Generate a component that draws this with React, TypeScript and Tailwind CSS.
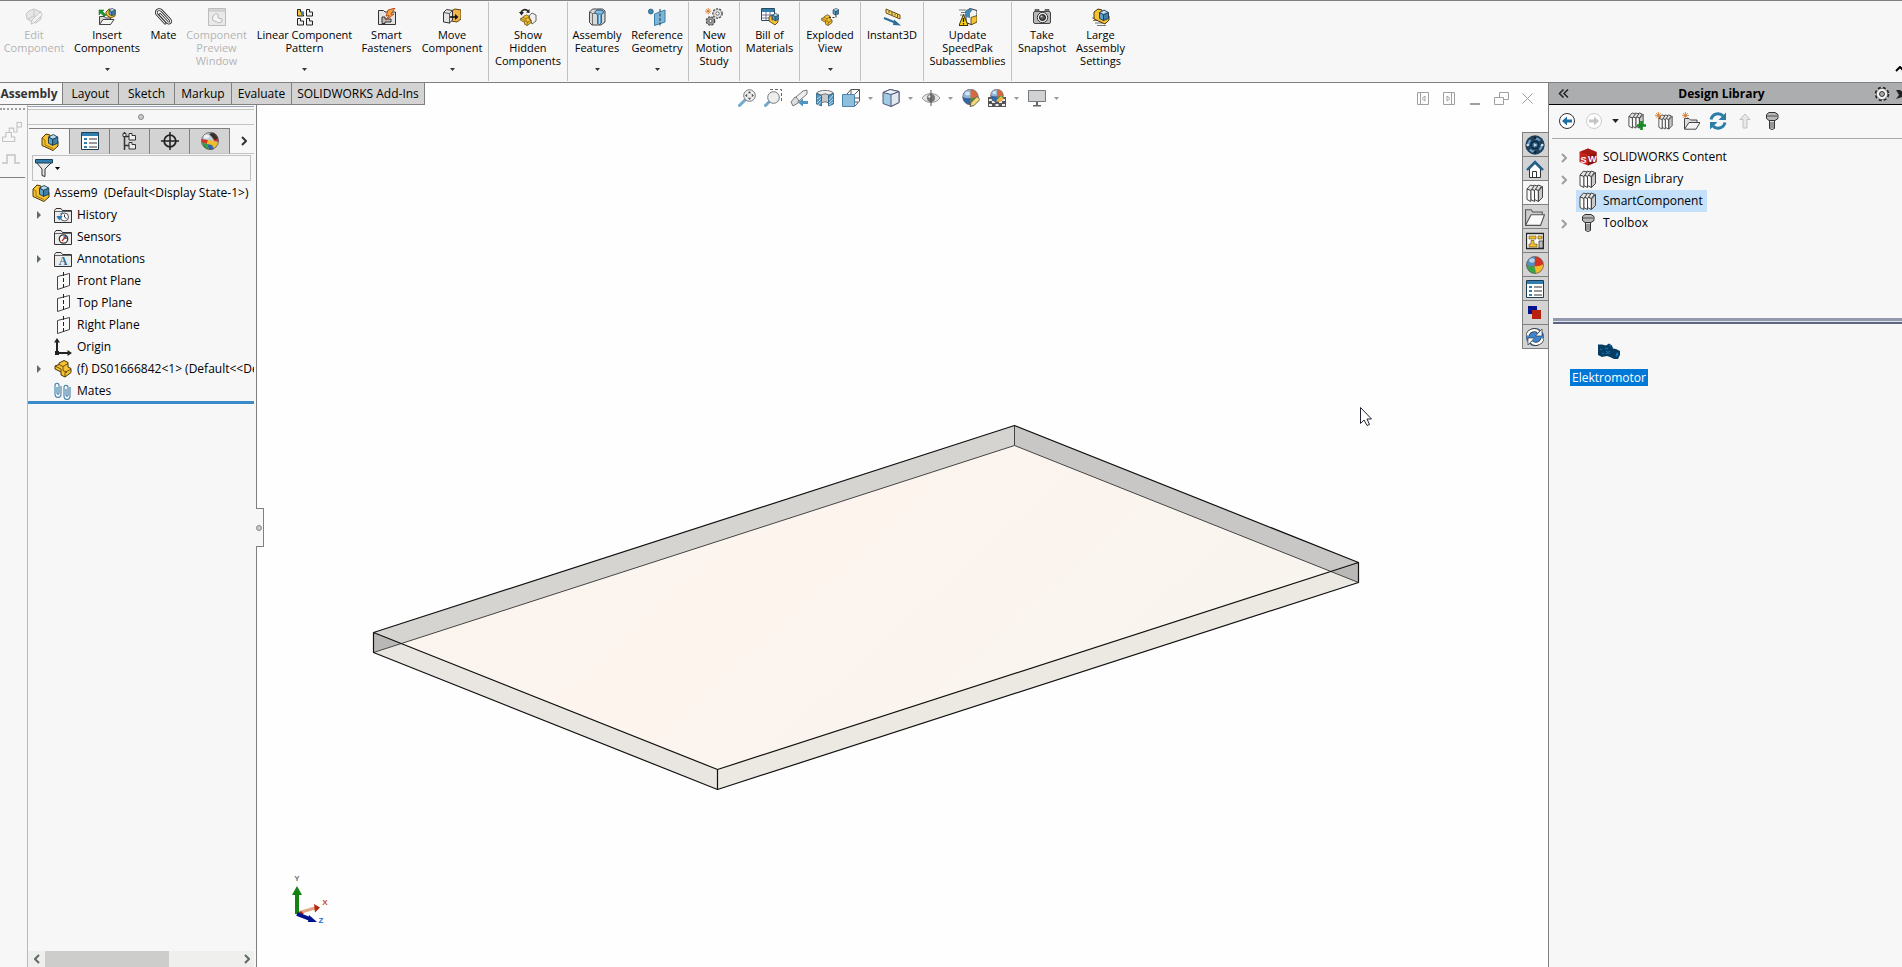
import type { ReactNode } from "react";
import clsx from "clsx";

type IconProps = { className?: string };

function Svg({ children, className, box = "0 0 18 18" }: { children: ReactNode; className?: string; box?: string }) {
  return (
    <svg viewBox={box} className={clsx("shrink-0", className ?? "size-[18px]")} fill="none" aria-hidden="true">
      {children}
    </svg>
  );
}

/* ---------- shared shapes ---------- */

function PartShape({ fill = "#f6c233", stroke = "#4a3606" }) {
  return (
    <g stroke={stroke} strokeLinejoin="round">
      <path d="M1 6l4-1.500V3l5-2.500 4 2V7l3 1.500v4L11 17l-4-2v-3L1 9z" fill={fill} />
      <path d="M5 4.500l4 2v4l4 2M9 6.500l5-3M11 17v-4.500l6-3.500M1 6l6 3v3" strokeWidth=".8" />
    </g>
  );
}

function CubeShape({ x = 0, y = 0, s = 1, front = "#5f9fc8", top = "#b9dcf0", side = "#3f7fab" }) {
  return (
    <g transform={`translate(${x} ${y}) scale(${s})`} stroke="#1c3c50" strokeLinejoin="round" strokeWidth=".9">
      <path d="M0 3l4 2v6L0 9z" fill={front} />
      <path d="M4 5l5-2v6l-5 2z" fill={side} />
      <path d="M0 3l4.500-2.500L9 3 4 5z" fill={top} />
    </g>
  );
}

function FolderShape() {
  return (
    <>
      <path d="M.500 16.500V4.500L2 2.500h5l1.500 2h9v12z" fill="#ececec" stroke="#333" />
      <path d="M1 5.500h16" stroke="#666" />
    </>
  );
}

function BooksShape() {
  return (
    <g stroke="#333" strokeLinejoin="round" strokeWidth=".9">
      <path d="M12.500 7l4-4.500v11l-4 4z" fill="#c9c9c9" />
      {[8.5, 4.700, 1].map((x) => (
        <g key={x}>
          <path d={`M${x} 5l3.500-4 3.500 1.200-3.300 4.500z`} fill="#e2e2e2" />
          <path d={`M${x} 5l3.800 1.500v11L${x} 15.500z`} fill="#fbfbfb" />
        </g>
      ))}
    </g>
  );
}

function Spark() {
  return <path d="M4 0v8M0 4h8M1.300 1.300l5.400 5.400M6.700 1.300L1.300 6.700" stroke="#d4741c" strokeWidth="1" />;
}

/* ---------- command icons ---------- */

const EditComponent = () => (
  <Svg>
    <g stroke="#c6c6c6" fill="#e6e6e6" strokeLinejoin="round">
      <path d="M1 6l3-3 5-2 7 3v7l-5 4-4-1-5-3z" />
      <path d="M9 2v6l-6 3M9 8l6 2" />
      <path d="M6 16l1-4 8-8 2.500 2.500-8 8z" fill="#f2f2f2" />
    </g>
  </Svg>
);

const InsertComponents = () => (
  <Svg>
    <path d="M1.500 16.500v-8h5l1 1.500h5v6.500z" fill="#d5d5d5" stroke="#444" />
    <path d="M1.500 16.500l3.500-5h11l-3.500 5z" fill="#f4f4f4" stroke="#444" />
    <path d="M1 7V2h5L4.500 3.500 8 7 6 8.500 2.800 5z" fill="#1a9a2c" stroke="#0e5e18" strokeWidth=".5" />
    <path d="M8 4l3-3 6 1v6l-4 2-5-3z" fill="#f6c233" stroke="#4a3606" strokeWidth=".8" />
    <CubeShape x={11} y={0} s={0.7} />
  </Svg>
);

const clipPath =
  "M5 6.500l7.500 8c1.200 1.200 3 .4 3.200-.8.200-.8-.2-1.400-.7-2L7 3C5.500 1.300 3.500 1.200 2.300 2.300 1 3.500 1.200 5.500 2.500 7l7.500 8.200";

const Mate = () => (
  <Svg>
    <path d={clipPath} stroke="#222" strokeWidth="2.600" strokeLinecap="round" />
    <path d={clipPath} stroke="#eee" strokeWidth="1.100" strokeLinecap="round" />
  </Svg>
);

const PreviewWindow = () => (
  <Svg>
    <path d="M.5.500h17v17H.5z" fill="#e9e9e9" stroke="#bcbcbc" />
    <path d="M1 2.500h16" stroke="#cfcfcf" strokeWidth="2.500" />
    <path d="M5 8l3-2.500 2 1V10l4 1v2.500L11 15l-6.500-3z" fill="#f5f5f5" stroke="#b6b6b6" />
  </Svg>
);

const LinearPattern = () => (
  <Svg>
    {[
      [1, 1],
      [10, 1],
      [1, 10],
      [10, 10],
    ].map(([x, y], i) => (
      <g key={i} transform={`translate(${x} ${y})`} strokeLinejoin="round">
        <path d="M.5.500h3v2.500h3V7H.5z" fill={i === 0 ? "#f3c441" : "#f0f0f0"} stroke="#222" />
        {i === 0 ? <path d="M4 3h3v3H4z" fill="#3b82b4" /> : null}
      </g>
    ))}
  </Svg>
);

const SmartFasteners = () => (
  <Svg>
    <path d="M.5 16.500V2.500h5L7 4h10.500v12.500z" fill="#e4e4e4" stroke="#333" />
    <path d="M4 9h3v2h6v3H7v1.500H4z" fill="#bbb" stroke="#333" />
    <path d="M17 0l-7 2-2 6 3-.5L8 12l8-6-3 .2z" fill="#f5a13c" stroke="#a9370d" strokeWidth=".8" />
  </Svg>
);

const MoveComponent = () => (
  <Svg>
    <path d="M8 3l4-2 6 1v9l-4 3-6-1z" fill="#eeb44a" stroke="#5d4409" />
    <path d="M.5 4.500l3-3 6 1v9.500l-3 3-6-1z" fill="#e4e4e4" stroke="#333" />
    <path d="M.5 4.500l6 1v10M6.500 5.500l3-3" stroke="#333" strokeWidth=".8" />
    <path d="M7 9h6" stroke="#111" strokeWidth="1.600" />
    <path d="M12 6l3.500 3-3.500 3z" fill="#111" />
  </Svg>
);

const ShowHidden = () => (
  <Svg>
    <path d="M2 5c1-4 5-4 7-2" stroke="#222" strokeWidth="1.600" />
    <path d="M0 4h5L2.500 7.500zM7 4.500L10.500 1v4z" fill="#222" />
    <path d="M10 8l3-3 4 2v6l-4 3z" fill="#f1f1f1" stroke="#666" />
    <g transform="translate(1 6.500) scale(.65)">
      <PartShape />
    </g>
  </Svg>
);

const AssemblyFeatures = () => (
  <Svg>
    <path d="M1.500 4l3-3h10l2.500 2v11l-4 3h-9l-2.500-2.500z" fill="#d9d9d9" stroke="#444" />
    <path d="M1.500 4l3 1.500V17M4.500 5.500H8" stroke="#555" strokeWidth=".8" />
    <path d="M6.500 4l2.500-2h5l2 2-1.500 2-1 .5v8.500l-2 1.500-2-1V7z" fill="#5f9fc8" stroke="#1d5270" strokeWidth=".8" />
    <path d="M11.500 7v9M8 4h6" stroke="#b9dcf0" />
  </Svg>
);

const ReferenceGeometry = () => (
  <Svg>
    <circle cx="2.800" cy="3.500" r="2.500" fill="#3f86b5" stroke="#1d4f71" strokeWidth=".6" />
    <path d="M6.500 6L17 2v12L6.500 17.500z" fill="#7fb6d8" stroke="#3c7da6" />
    <path d="M12 1v17" stroke="#17384d" strokeDasharray="3 1.500" />
  </Svg>
);

function Gear({ cx, cy, r, fill }: { cx: number; cy: number; r: number; fill: string }) {
  return (
    <g>
      <circle cx={cx} cy={cy} r={r} fill={fill} stroke="#444" strokeWidth="1.600" strokeDasharray="2 1.200" />
      <circle cx={cx} cy={cy} r={r - 0.5} fill={fill} stroke="#666" strokeWidth=".5" />
      <circle cx={cx} cy={cy} r={r / 2.6} fill="#fff" stroke="#444" strokeWidth=".8" />
    </g>
  );
}

const MotionStudy = () => (
  <Svg>
    <g transform="scale(.8)">
      <Spark />
    </g>
    <Gear cx={12.5} cy={5.5} r={4.5} fill="#efefef" />
    <Gear cx={5.5} cy={13} r={4} fill="#a5a5a5" />
  </Svg>
);

const BillOfMaterials = () => (
  <Svg>
    <path d="M.5.500h13v12H.5z" fill="#fff" stroke="#2b4a5e" />
    <path d="M1 1h12v3H1z" fill="#2f7eae" />
    <path d="M1 7h12M1 10h12M5 4v8M9 4v8" stroke="#557" strokeWidth=".8" />
    <path d="M8 9l3-2v5l6-2v4l-3 3-6-4z" fill="#f6c233" stroke="#4a3606" strokeWidth=".8" />
    <CubeShape x={11.5} y={5} s={0.7} />
  </Svg>
);

const ExplodedView = () => (
  <Svg>
    <g transform="translate(0 6.500) scale(.65)">
      <PartShape />
    </g>
    <CubeShape x={12} y={0} s={0.65} />
    <path d="M8 9.500h7V6" stroke="#333" strokeDasharray="2 1.500" />
  </Svg>
);

const Instant3D = () => (
  <Svg>
    <path d="M3 1l14 6v4L3 5z" fill="#f8d868" stroke="#6a5010" />
    <path d="M6 3v2M9 4v3M12 5.500v2M14.500 6.500v3" stroke="#333" strokeWidth=".8" />
    <path d="M1 10l11 4.500" stroke="#2b6d97" strokeWidth="2" />
    <path d="M11 11.500l7 6-8-.5z" fill="#2b6d97" />
  </Svg>
);

const SpeedPak = () => (
  <Svg>
    <path d="M0 2h7M2 4.500h6M1 7h6" stroke="#555" strokeWidth=".8" />
    <path d="M7 3l4-2.500 7 2v11l-6 3-5-2z" fill="#f3f3f3" stroke="#333" />
    <path d="M12 9.500l6-2v6.500l-6 3z" fill="#f6c233" stroke="#4a3606" strokeWidth=".8" />
    <path d="M7 3l4-2.500 3 1-3 3.500v5l-4-1z" fill="#4388b5" />
    <path d="M4.500 6.500l4.500 11H0z" fill="#ffd80f" stroke="#3b3000" strokeLinejoin="round" />
    <path d="M4.500 10v4M4.500 15v1.500" stroke="#111" strokeWidth="1.300" />
  </Svg>
);

const Snapshot = () => (
  <Svg>
    <rect x=".5" y="3.500" width="17" height="12" rx="1.500" fill="#b9b9b9" stroke="#444" />
    <path d="M2 1.500h4v2H2zM12 1.500h4v2h-4z" fill="#777" stroke="#444" strokeWidth=".7" />
    <circle cx="9.500" cy="9.500" r="5.200" fill="#eee" stroke="#333" />
    <circle cx="9.500" cy="9.500" r="3" fill="#555" stroke="#111" />
    <circle cx="8.500" cy="8.500" r="1" fill="#ddd" />
  </Svg>
);

const LargeAssembly = () => (
  <Svg>
    <path d="M0 10h5M1 12.500h7M3 15h8M5 17.500h9" stroke="#666" strokeWidth=".9" />
    <path d="M2 4l4-3 4 1v6l3 2 4-2v4l-4 4-11-5z" fill="#f6c233" stroke="#4a3606" />
    <CubeShape x={7.500} y={1.500} s={1} />
  </Svg>
);

const Assembly = ({ className }: IconProps) => (
  <Svg className={className}>
    <path d="M1 5l4-4 4 1v7l3 2 5-2.500v4.500l-5 4.500L1 12.500z" fill="#f6c233" stroke="#4a3606" strokeLinejoin="round" />
    <path d="M1 5l3 2v5l8 3.500" stroke="#8a650b" strokeWidth=".8" />
    <CubeShape x={7.500} y={1} s={1.030} />
  </Svg>
);

/* ---------- feature tree icons ---------- */

const PropertyList = () => (
  <Svg>
    <path d="M.5.500h17v17H.5z" fill="#fff" stroke="#1d3f55" />
    <path d="M1 1h16v3H1z" fill="#2f7eae" />
    <path d="M3 7h3M3 11h3M3 15h3" stroke="#2f7eae" strokeWidth="2" />
    <path d="M8 7h8M8 11h8M8 15h8" stroke="#333" />
  </Svg>
);

const ConfigTree = () => (
  <Svg>
    <path d="M3.500 0v18M3.500 4.500H8M3.500 13.500H8" stroke="#333" strokeWidth="1.500" />
    <path d="M2 1.500h3v3H2zM8 1.500h3v2h3.500V8H8zM8 10.500h3v2h3.500V17H8z" fill="#eee" stroke="#333" />
  </Svg>
);

const Crosshair = () => (
  <Svg>
    <circle cx="9" cy="9" r="5.800" stroke="#222" strokeWidth="1.800" />
    <path d="M9 0v18M0 9h18" stroke="#222" strokeWidth="1.500" />
  </Svg>
);

const DisplayBall = () => (
  <Svg>
    <circle cx="9" cy="9" r="8.500" fill="#b9ccd9" />
    <path d="M1 7l6 1-1 4-5-1.500a8 8 0 0 1 0-3.500z" fill="#d63422" />
    <path d="M1 10.500L6 12l2 5.500a8.500 8.500 0 0 1-7-7z" fill="#2f9e3d" />
    <path d="M7 8l6 1 4 2a8.500 8.500 0 0 1-9 6.500L6 12z" fill="#f2bd2c" />
    <path d="M6 12l5 1 2 4a8.500 8.500 0 0 1-5 .5z" fill="#2f66a8" />
    <path d="M10 .600A8.500 8.500 0 0 1 17.500 10L13 9l-2-4z" fill="#d63422" />
    <path d="M8 2l4-1.500c3 1 4.500 3 5 6L14 8z" fill="#3a2f2f" />
    <circle cx="9" cy="9" r="8.500" stroke="#555" strokeWidth=".8" />
    <ellipse cx="5.500" cy="4.500" rx="2.800" ry="2" fill="#fff" opacity=".75" />
  </Svg>
);

const AppearanceBall = () => (
  <Svg>
    <circle cx="9" cy="9" r="8.500" fill="#d63422" />
    <path d="M9 .5A8.500 8.500 0 0 0 .5 9c3 1.500 6 2 8 1z" fill="#4f8fc4" />
    <path d="M.5 9A8.500 8.500 0 0 0 10 17.500L8.500 10C6 11 3 10.500.5 9z" fill="#3ba447" />
    <path d="M10 17.500A8.500 8.500 0 0 0 17.500 8c-3 2-6 2.500-9 2z" fill="#f2bd2c" />
    <circle cx="9" cy="9" r="8.500" stroke="#555" strokeWidth=".6" />
    <ellipse cx="6" cy="4.500" rx="2.800" ry="2.200" fill="#fff" opacity=".6" />
  </Svg>
);

const History = () => (
  <Svg>
    <FolderShape />
    <circle cx="10.500" cy="11" r="4" fill="#fff" stroke="#555" />
    <path d="M10.500 8.500V11l2 1.500" stroke="#333" />
    <path d="M3 10.500h5l-2.500 3.500zM6 8.500a5 5 0 0 1 3-2" fill="#2f7eae" stroke="#2f7eae" />
  </Svg>
);

const Sensors = () => (
  <Svg>
    <FolderShape />
    <circle cx="9.500" cy="11" r="4.200" fill="#fff" stroke="#333" strokeWidth="1.300" />
    <path d="M9.500 11V7.500A3.500 3.500 0 0 1 13 11z" fill="#3b82b4" />
    <path d="M8 13l4-4.500" stroke="#c9331d" strokeWidth="1.500" />
  </Svg>
);

const Annotations = () => (
  <Svg>
    <FolderShape />
    <text x="9" y="15" textAnchor="middle" fontSize="12" fontWeight="700" fontFamily="Liberation Serif, serif" fill="#2b6d97">
      A
    </text>
  </Svg>
);

const Plane = () => (
  <Svg>
    <path d="M3.500 4.500l12-3v12l-12 4z" fill="#fbfbfb" stroke="#444" />
    <path d="M9.500 0v18" stroke="#222" strokeDasharray="4 2" />
  </Svg>
);

const Origin = () => (
  <Svg>
    <path d="M3 3v12h12" stroke="#222" strokeWidth="2" />
    <path d="M0 4.500L3 0l3 4.500zM13.500 12l4.500 3-4.500 3z" fill="#222" />
    <path d="M1 13h4v4H1z" fill="#222" />
  </Svg>
);

const Part = () => (
  <Svg>
    <PartShape />
  </Svg>
);

const Mates = () => (
  <Svg>
    <path d="M3 5v6c0 1.500 2 1.500 2 0V3.500C5 .5 1 .5 1 3.500V12c0 4.500 6 4.500 6 0V4" stroke="#3f7fab" strokeWidth="1.100" />
    <path d="M12 7v6c0 1.500 2 1.500 2 0V5.500c0-3-4-3-4 0V14c0 4.500 6 4.500 6 0V5" stroke="#3f7fab" strokeWidth="1.100" />
  </Svg>
);

/* ---------- heads-up toolbar icons ---------- */

const ZoomFit = () => (
  <Svg>
    <path d="M1.500 16.500l5.500-5.500" stroke="#6fa9cd" strokeWidth="3" strokeLinecap="round" />
    <circle cx="11.500" cy="6.500" r="5.800" fill="#eee" stroke="#777" />
    <path d="M11.500 2l1.700 2.200H9.800zM11.500 11l1.700-2.200H9.800zM7 6.500l2.200-1.700v3.400zM16 6.500l-2.200-1.700v3.400z" fill="#555" />
  </Svg>
);

const ZoomArea = () => (
  <Svg>
    <path d="M6 .5h11.500V12" stroke="#666" strokeDasharray="3 2" />
    <path d="M1.500 16.500l4-4" stroke="#6fa9cd" strokeWidth="3" strokeLinecap="round" />
    <circle cx="9.500" cy="8.500" r="5.800" fill="#eee" stroke="#777" />
  </Svg>
);

const PreviousView = () => (
  <Svg>
    <path d="M1 13l4-5 4 1-1 5-5 3z" fill="#ddd" stroke="#777" />
    <path d="M6 8l7-6 4-1v4l-8 7z" fill="#eee" stroke="#777" />
    <path d="M8 13.500L13 9.500v2.500h5v3h-5v2.500z" fill="#5095bf" />
  </Svg>
);

const SectionView = () => (
  <Svg>
    <path d="M.500 4c3-3.500 14-3.500 17 0L13 6H5z" fill="#eee" stroke="#777" />
    <path d="M5.500 6c2-1.500 5-1.500 7 0v8c-2-1.500-5-1.500-7 0z" fill="#c9c9c9" stroke="#777" />
    <path d="M.500 4.500l5 2v10.500l-5-2zM12.500 6.500l5-2v10.500l-5 2z" fill="#4f94bf" stroke="#2d5f7d" strokeWidth=".8" />
    <path d="M1 10l4-3M1 14l4-4M2 16l3.500-3M13 11l4-5M13 14l4-4M13 16l4-3" stroke="#d5ecf8" strokeWidth=".8" />
  </Svg>
);

const ViewOrientation = () => (
  <Svg>
    <path d="M5 5l4-4.500h8.500V12L13 17M13 5l4.500-4.500M9 .5V5M13 9h4M13 13h3" stroke="#555" />
    <path d="M.5 5.500h12v12H.5z" fill="#8ebfdc" stroke="#4b86aa" />
  </Svg>
);

const DisplayStyle = () => (
  <Svg>
    <path d="M1 3.500l7-3 9 2v11l-8 4-8-3z" fill="#9fcbe4" stroke="#557" />
    <path d="M9 5.500l8-3v11l-8 4z" fill="#dfe9ef" stroke="#557" />
    <path d="M1 3.500l7-3 9 2-8 3z" fill="#e9f4fa" stroke="#557" />
  </Svg>
);

const HideShow = () => (
  <Svg>
    <path d="M0 9c4-6 14-6 18 0-4 6-14 6-18 0z" fill="#e3e3e3" stroke="#999" />
    <circle cx="9" cy="9" r="4" fill="#777" />
    <circle cx="7.500" cy="7.500" r="1.200" fill="#eee" />
    <path d="M9 1v16" stroke="#555" />
  </Svg>
);

function QuadBall() {
  return (
    <>
      <circle cx="8.500" cy="8" r="7.800" fill="#d7683f" />
      <path d="M8.500.2A7.800 7.800 0 0 0 .7 8c2.500 1.200 5.500 1.500 8 1z" fill="#8fb6d6" />
      <path d="M.7 8a7.800 7.800 0 0 0 7.800 7.800L8.700 9c-2.500.5-5.500.2-8-1z" fill="#2d68a8" />
      <path d="M8.500 15.800A7.800 7.800 0 0 0 16.300 8c-2.300.8-5 1.200-7.600 1z" fill="#46913f" />
      <circle cx="8.500" cy="8" r="7.800" stroke="#667" strokeWidth=".7" />
      <ellipse cx="5.500" cy="4.500" rx="2.500" ry="2" fill="#fff" opacity=".6" />
    </>
  );
}

const EditAppearance = () => (
  <Svg>
    <QuadBall />
    <path d="M8 17.500l1-4 6-6 3 3-6 6z" fill="#f8d77a" stroke="#554" strokeWidth=".9" />
  </Svg>
);

const ApplyScene = () => (
  <Svg>
    <path d="M0 8h18v10H0z" fill="#555" />
    <path d="M1 10h3v2H1zM14 10h3v2h-3zM4 12h3v2H4zM11 12h3v2h-3zM1 15h3v2H1zM7.500 15h3v2h-3zM14 15h3v2h-3z" fill="#eee" />
    <g transform="translate(2 0) scale(.82)">
      <QuadBall />
    </g>
    <path d="M8 12l5-5 3 3-4 3z" fill="#f0b34a" />
  </Svg>
);

const ViewSettings = () => (
  <Svg>
    <path d="M.5 1.500h17v11H.5z" fill="#d0d3d5" stroke="#777" />
    <path d="M8 13h2v3H8zM5 16h8v1.500H5z" fill="#666" />
  </Svg>
);

/* ---------- task pane icons ---------- */

const Books = () => (
  <Svg>
    <BooksShape />
  </Svg>
);

const AddBooks = () => (
  <Svg>
    <g transform="scale(.92)">
      <BooksShape />
    </g>
    <path d="M13.500 9v9M9 13.500h9" stroke="#128a1d" strokeWidth="2.600" />
  </Svg>
);

const NewBooks = () => (
  <Svg>
    <g transform="translate(3 2) scale(.86)">
      <BooksShape />
    </g>
    <g transform="scale(.85)">
      <Spark />
    </g>
  </Svg>
);

const NewFolder = () => (
  <Svg>
    <path d="M2.500 17V6.500H7L8.500 8H15v3" fill="#ddd" stroke="#444" />
    <path d="M2.500 17.200L7 10.500h11l-4 6.700z" fill="#f5f5f5" stroke="#444" />
    <g transform="scale(.85)">
      <Spark />
    </g>
  </Svg>
);

const Refresh = () => (
  <Svg>
    <path d="M2 7.500C3.500 1 11 .5 14 4" stroke="#2d7ba9" strokeWidth="3" />
    <path d="M17 .5V8H9.500z" fill="#2d7ba9" />
    <path d="M16 10.500C14.500 17 7 17.500 4 14" stroke="#2d7ba9" strokeWidth="3" />
    <path d="M1 17.500V10h7.500z" fill="#2d7ba9" />
  </Svg>
);

const UpArrow = () => (
  <Svg>
    <path d="M9 2l5 5.500h-3V16H7V7.500H4z" fill="#e8e8e8" stroke="#c0c0c0" />
  </Svg>
);

const Bolt = () => (
  <Svg>
    <path d="M3.500 2.500L6 .5h6l3 2v4l-3 2H6l-2.500-2z" fill="#b8b8b8" stroke="#333" />
    <path d="M6.500 8.500h5v8l-2.500 1-2.500-1z" fill="#ddd" stroke="#333" />
    <path d="M6.500 11h5M6.500 13h5M6.500 15h5M4 4h10" stroke="#444" strokeWidth=".9" />
  </Svg>
);

const SolidWorks = () => (
  <Svg>
    <path d="M.5 4L9 .5 17.500 4v10L9 17.500.5 14z" fill="#c4241c" />
    <path d="M9 7l8.500-3v10L9 17.500z" fill="#8f140f" />
    <path d="M.5 4L9 .5 17.500 4 9 6.500z" fill="#a81b14" />
    <text x="1.500" y="14.500" fontSize="9" fontWeight="700" fontFamily="Liberation Sans, sans-serif" fill="#fff">
      S
    </text>
    <text x="9" y="14" fontSize="9" fontWeight="700" fontFamily="Liberation Sans, sans-serif" fill="#fff">
      W
    </text>
  </Svg>
);

const Wheel = () => (
  <Svg className="size-5">
    <circle cx="9" cy="9" r="8.700" fill="#20405c" />
    <circle cx="9" cy="9" r="6" stroke="#6d9cc0" strokeWidth="2" strokeDasharray="5 4.400" />
    <circle cx="9" cy="9" r="3" fill="#2f6fa0" stroke="#0f2436" />
    <path d="M8 7.500l3 1.500-3 1.500z" fill="#bcd9ee" />
    <circle cx="2.500" cy="9" r="1.200" fill="#d9e6ef" />
    <circle cx="15.500" cy="9" r="1.200" fill="#d9e6ef" />
    <circle cx="9" cy="2.500" r="1.200" fill="#0f2436" />
    <circle cx="9" cy="15.500" r="1.200" fill="#0f2436" />
  </Svg>
);

const Home = () => (
  <Svg>
    <path d="M3.500 9v8.500h11V9L9 3.500z" fill="#fff" stroke="#333" />
    <path d="M6.500 17.500v-6h4v6" stroke="#333" />
    <path d="M1 10l8-8 8 8" stroke="#1f5f8a" strokeWidth="2.400" />
  </Svg>
);

const OpenFolder = () => (
  <Svg className="size-5">
    <path d="M.5 16.500v-14h5L7 4.500h8.500V7" fill="#ccc" stroke="#555" />
    <path d="M.5 16.500L5.500 7h12l-3.500 9.500z" fill="#fafafa" stroke="#555" />
  </Svg>
);

const ViewPalette = () => (
  <Svg>
    <path d="M.5 1.500h17v15H.5z" fill="#fff" stroke="#222" strokeWidth="1.300" />
    <path d="M3 4h7v3H3zM12 4h4v3h-4zM5 8.500h3V12h3v3H3v-3h2z" fill="#f4c02c" stroke="#5d4409" strokeWidth=".6" />
    <path d="M13 9h4v7h-4z" fill="#bbb" stroke="#333" strokeWidth=".8" />
  </Svg>
);

const RedBlue = () => (
  <Svg>
    <path d="M2 2h9v8H2z" fill="#00128e" />
    <path d="M6 6h9v9H6z" fill="#b9210f" />
  </Svg>
);

const Forum = () => (
  <Svg>
    <circle cx="9" cy="9" r="8.700" fill="#3f86d0" stroke="#24425f" strokeWidth=".6" />
    <path d="M1.500 7.500C3 1.500 10 1 12.500 4" stroke="#333" strokeWidth="3.600" />
    <path d="M1.500 7.500C3 1.500 10 1 12.500 4" stroke="#fff" strokeWidth="2.400" />
    <path d="M16 1v7H9.500z" fill="#fff" stroke="#333" strokeWidth=".7" />
    <path d="M16.500 10.500c-1.500 6-8.500 6.500-11 3.500" stroke="#333" strokeWidth="3.600" />
    <path d="M16.500 10.500c-1.500 6-8.500 6.500-11 3.500" stroke="#fff" strokeWidth="2.400" />
    <path d="M2 17v-7h6.500z" fill="#fff" stroke="#333" strokeWidth=".7" />
  </Svg>
);

const Motor = () => (
  <Svg box="0 0 24 17" className="h-[17px] w-6">
    <path d="M1 1.500h4l4 1 3-2 3 2 1 3 3 .5 4 2v4l-2 4h-4l-4-2-3-1-5 1-4-2V8z" fill="#063d63" />
    <path d="M3 6l2 1M8 5l3 1M9 8l4 3M13 8l-4 3M12 2l2 1M19 13l1-3 1 0-1 3zM5 10l2 1" stroke="#1476c6" />
  </Svg>
);

const Caret = ({ className }: IconProps) => (
  <Svg box="0 0 5 3" className={className ?? "h-[3px] w-[5px]"}>
    <path d="M0 0h5L2.500 3z" fill="currentColor" />
  </Svg>
);

const Expander = () => (
  <Svg box="0 0 4 8" className="h-2 w-1">
    <path d="M0 0l4 4-4 4z" fill="#5e6d60" />
  </Svg>
);

const Chevron = ({ className }: IconProps) => (
  <Svg box="0 0 6 10" className={clsx("h-[10px] w-[6px]", className)}>
    <path d="M1 1l4 4-4 4" stroke="currentColor" strokeWidth="2" />
  </Svg>
);

/* ---------- ribbon ---------- */

type Command = {
  label: string;
  icon: () => ReactNode;
  width: string;
  menu?: boolean;
  disabled?: boolean;
};

const ribbonGroups: Command[][] = [
  [
    { label: "Edit\nComponent", icon: EditComponent, width: "w-[68px]", disabled: true },
    { label: "Insert\nComponents", icon: InsertComponents, width: "w-[78px]", menu: true },
    { label: "Mate", icon: Mate, width: "w-[35px]" },
    { label: "Component\nPreview\nWindow", icon: PreviewWindow, width: "w-[71px]", disabled: true },
    { label: "Linear Component\nPattern", icon: LinearPattern, width: "w-[105px]", menu: true },
    { label: "Smart\nFasteners", icon: SmartFasteners, width: "w-[59px]" },
    { label: "Move\nComponent", icon: MoveComponent, width: "w-[72px]", menu: true },
  ],
  [{ label: "Show\nHidden\nComponents", icon: ShowHidden, width: "w-[78px]" }],
  [
    { label: "Assembly\nFeatures", icon: AssemblyFeatures, width: "w-[58px]", menu: true },
    { label: "Reference\nGeometry", icon: ReferenceGeometry, width: "w-[62px]", menu: true },
  ],
  [{ label: "New\nMotion\nStudy", icon: MotionStudy, width: "w-[50px]" }],
  [{ label: "Bill of\nMaterials", icon: BillOfMaterials, width: "w-[59px]" }],
  [{ label: "Exploded\nView", icon: ExplodedView, width: "w-[60px]", menu: true }],
  [{ label: "Instant3D", icon: Instant3D, width: "w-[62px]" }],
  [{ label: "Update\nSpeedPak\nSubassemblies", icon: SpeedPak, width: "w-[87px]" }],
  [
    { label: "Take\nSnapshot", icon: Snapshot, width: "w-[60px]" },
    { label: "Large\nAssembly\nSettings", icon: LargeAssembly, width: "w-[57px]" },
  ],
];

function Ribbon() {
  return (
    <header className="flex h-[83px] shrink-0 border-y border-[#808080] bg-[#f7f7f7]">
      {ribbonGroups.map((group, i) => (
        <div key={i} className="flex">
          {i > 0 ? <div className="my-px w-px bg-[#c0c0c0]" /> : null}
          {group.map((cmd) => (
            <button
              key={cmd.label}
              disabled={cmd.disabled}
              className={clsx(
                "flex flex-col items-center pt-[7px] pb-[11px] text-[11px] leading-[13px]",
                cmd.width,
                cmd.disabled && "text-[#b4b4b4]",
              )}
            >
              <cmd.icon />
              <span className="mt-0.5 text-center whitespace-pre">{cmd.label}</span>
              {cmd.menu ? <Caret className="mt-auto h-[3px] w-[5px] text-[#333]" /> : null}
            </button>
          ))}
        </div>
      ))}
      <div className="ml-auto flex items-end pb-2">
        <Chevron className="-mr-px -rotate-90" />
      </div>
    </header>
  );
}

/* ---------- tabs and view toolbar ---------- */

const ribbonTabs = [
  { label: "Layout", width: "w-[56px]" },
  { label: "Sketch", width: "w-[56px]" },
  { label: "Markup", width: "w-[57px]" },
  { label: "Evaluate", width: "w-[60px]" },
  { label: "SOLIDWORKS Add-Ins", width: "w-[134px]" },
];

const viewTools = [
  { name: "Zoom to Fit", icon: ZoomFit },
  { name: "Zoom to Area", icon: ZoomArea },
  { name: "Previous View", icon: PreviousView },
  { name: "Section View", icon: SectionView },
  { name: "View Orientation", icon: ViewOrientation, menu: true },
  { name: "Display Style", icon: DisplayStyle, menu: true },
  { name: "Hide/Show Items", icon: HideShow, menu: true },
  { name: "Edit Appearance", icon: EditAppearance },
  { name: "Apply Scene", icon: ApplyScene, menu: true },
  { name: "View Settings", icon: ViewSettings, menu: true },
];

const windowTools = [
  { name: "Collapse left", path: "M1.500.500h11v12h-11zM4.500.500v12M9 4L6 6.500 9 9z" },
  { name: "Collapse right", path: "M1.500.500h11v12h-11zM9.500.500v12M5 4l3 2.500L5 9z" },
  { name: "Minimize", path: "M2 11.500h10M2 12.500h10" },
  { name: "Restore", path: "M.5 5.500h9v7h-9zM5.500 5V.500h9v7H10" },
  { name: "Close", path: "M2.500 1.500l10 10M12.500 1.500l-10 10" },
];

function TabBar() {
  return (
    <div className="flex h-[22px] shrink-0 items-start">
      <nav className="flex h-[22px] border-b border-[#808080] bg-[#d3d3d3]">
        <button className="w-[62px] bg-[#f7f7f7] pr-1 text-center font-bold text-[#333]">Assembly</button>
        {ribbonTabs.map((tab) => (
          <button
            key={tab.label}
            className={clsx("border-l border-[#808080] text-center whitespace-nowrap last:border-r", tab.width)}
          >
            {tab.label}
          </button>
        ))}
      </nav>
      <div className="z-10 flex h-[30px] flex-1 items-center justify-center pr-[38px]">
        {viewTools.map((tool) => (
          <div key={tool.name} className="flex items-center">
            <button aria-label={tool.name} className="flex w-[26px] justify-center">
              <tool.icon />
            </button>
            {tool.menu ? (
              <button aria-label={`${tool.name} options`} className="flex w-[14px] justify-center text-[#999]">
                <Caret />
              </button>
            ) : null}
          </div>
        ))}
      </div>
      <div className="z-10 mr-2 flex h-[30px] items-center">
        {windowTools.map((tool) => (
          <button key={tool.name} aria-label={tool.name} className="flex w-[26px] justify-center">
            <Svg box="0 0 15 13" className="h-[13px] w-[15px]">
              <path d={tool.path} stroke="#a0a0a0" />
            </Svg>
          </button>
        ))}
      </div>
    </div>
  );
}

/* ---------- feature manager ---------- */

const managerTabs = [
  { name: "Property Manager", icon: PropertyList },
  { name: "Configuration Manager", icon: ConfigTree },
  { name: "DimXpert Manager", icon: Crosshair },
  { name: "Display Manager", icon: DisplayBall },
];

const treeItems = [
  { label: "History", icon: History, open: true },
  { label: "Sensors", icon: Sensors },
  { label: "Annotations", icon: Annotations, open: true },
  { label: "Front Plane", icon: Plane },
  { label: "Top Plane", icon: Plane },
  { label: "Right Plane", icon: Plane },
  { label: "Origin", icon: Origin },
  { label: "(f) DS01666842<1> (Default<<Def", icon: Part, open: true },
  { label: "Mates", icon: Mates },
];

function SideStrip() {
  return (
    <div className="w-[27px] shrink-0 pt-[3px]">
      <div className="mr-0.5 border-t-2 border-dotted border-[#a0a0a0]" />
      <div className="mr-0.5 flex h-[68px] flex-col items-start gap-3 border-b border-[#808080] pt-3 pl-0.5">
        <Svg className="size-5">
          <path d="M.5 17.500v-4h3v-4h5v4h3v4zM6.500 9V5.500h4V9h3V5M13.500.500h4v4h-4z" stroke="#c4c4c4" />
        </Svg>
        <Svg box="0 0 18 10" className="h-[10px] w-[18px]">
          <path d="M0 9h5V1h8v8h5" stroke="#c4c4c4" strokeWidth="1.500" />
        </Svg>
      </div>
    </div>
  );
}

function FeatureManager() {
  return (
    <aside className="relative flex w-[230px] shrink-0 flex-col border-r border-l border-r-[#808080] border-l-[#b9b9b9] pr-0.5">
      <div className="mt-px h-1 border-y border-t-[#9aa3b5] border-b-[#c4c4c4]" />
      <div className="flex h-[15px] items-center justify-center border-b border-[#c4c4c4]">
        <span className="size-1.5 rounded-full border border-[#888] bg-[#ccc]" />
      </div>
      <div className="mt-[3px] ml-px flex h-[26px] shrink-0">
        <button
          aria-label="Feature Manager"
          className="flex w-10 items-center justify-center border-t border-[#808080] pl-0.5"
        >
          <Assembly />
        </button>
        {managerTabs.map((tab) => (
          <button
            key={tab.name}
            aria-label={tab.name}
            className="flex w-10 items-center justify-center border-y border-l border-[#808080] border-b-[#c4c4c4] bg-[#d3d3d3]"
          >
            <tab.icon />
          </button>
        ))}
        <button
          aria-label="More tabs"
          className="flex flex-1 items-center justify-center border-b border-l border-[#c4c4c4] border-l-[#808080] pl-1 text-[#333]"
        >
          <Chevron />
        </button>
      </div>
      <label className="mt-px mr-[3px] ml-1 flex h-[26px] shrink-0 items-center gap-0.5 border border-[#c0c0c0] pl-0.5">
        <Svg>
          <path d="M1 3l6 7v6.500l3 1V10l7-7z" fill="#e6e6e6" stroke="#333" />
          <path d="M.5.500h17V4H.5z" fill="#2f7eae" stroke="#1d3f55" />
        </Svg>
        <Caret />
        <input aria-label="Filter tree" className="min-w-0 flex-1 bg-transparent outline-none" />
      </label>
      <button className="mt-px flex h-[22px] shrink-0 items-center gap-1 pl-1 whitespace-pre">
        <Assembly />
        <span>{"Assem9  (Default<Display State-1>)"}</span>
      </button>
      <ul className="h-[200px] shrink-0 overflow-hidden border-b-3 border-[#3a8cc8]">
        {treeItems.map((item) => (
          <li key={item.label}>
            <button className="flex h-[22px] items-center whitespace-nowrap">
              <span className="flex w-[26px] shrink-0 pl-[9px]">{item.open ? <Expander /> : null}</span>
              <item.icon />
              <span className="ml-[5px]">{item.label}</span>
            </button>
          </li>
        ))}
      </ul>
      <div className="mt-auto flex h-4 items-center bg-[#efefed] text-[#5e6d60]">
        <button aria-label="Scroll left" className="flex w-[17px] justify-center">
          <Chevron className="rotate-180" />
        </button>
        <div className="flex h-full flex-1">
          <div className="w-16/25 bg-[#cdcdcb]" />
        </div>
        <button aria-label="Scroll right" className="flex w-[15px] justify-center">
          <Chevron />
        </button>
      </div>
      <button
        aria-label="Collapse panel"
        className="absolute top-[403px] -right-2 z-10 flex h-[39px] w-2 items-center border border-l-0 border-[#808080] bg-[#f7f7f7]"
      >
        <span className="size-1.5 shrink-0 rounded-full border border-[#888] bg-[#ccc]" />
      </button>
    </aside>
  );
}

/* ---------- graphics area ---------- */

function Model() {
  return (
    <svg
      viewBox="257 105 1291 862"
      fill="none"
      className="absolute inset-0 size-full"
      role="img"
      aria-label="Base plate model"
    >
      <defs>
        <linearGradient id="floor" x1="0" y1="0" x2="1" y2="0.400">
          <stop offset="0" stopColor="#faf5ee" />
          <stop offset="0.500" stopColor="#fdf4ee" />
          <stop offset="1" stopColor="#f8f5ee" />
        </linearGradient>
      </defs>
      <path d="M373.500 632.500L1014.500 425.500 1358.500 562.500V582.500L717.500 789.500 373.500 652.500z" fill="url(#floor)" />
      <path d="M373.500 632.500L1014.500 425.500V445.500L373.500 652.500z" fill="#d5d4d1" />
      <path d="M1014.500 425.500L1358.500 562.500V582.500L1014.500 445.500z" fill="#c8c7c6" />
      <path d="M373.500 632.500L717.500 769.500V789.500L373.500 652.500z" fill="#e9e6e1" />
      <path d="M1358.500 562.500V582.500L717.500 789.500V769.500z" fill="#ece8e2" />
      <path d="M373.500 632.500L401 643.500 373.500 652.500zM1358.500 562.500V582.500L1331 571.500z" fill="#bab8b7" />
      <path d="M373.500 652.500L1014.500 445.500 1358.500 582.500M1014.500 425.500V445.500" stroke="#444" />
      <path
        d="M373.500 632.500L1014.500 425.500 1358.500 562.500 717.500 769.500zM373.500 632.500V652.500L717.500 789.500 1358.500 582.500V562.500M717.500 769.500V789.500"
        stroke="#111"
        strokeWidth="1.200"
        strokeLinejoin="round"
      />

      <path d="M298 913l17-5" stroke="#e0a884" strokeWidth="3" />
      <path d="M314 904l6 3.500-5 5z" fill="#b5260f" />
      <path d="M297 914l4-3 3 3-5 1z" fill="#b5260f" />
      <path d="M297 914V893" stroke="#128312" strokeWidth="4" />
      <path d="M297 886l5 9h-10z" fill="#128312" />
      <path d="M297 914l13 5" stroke="#00128e" strokeWidth="4" />
      <path d="M309 915l8 7h-9z" fill="#00128e" />
      <g fontFamily="Liberation Sans, sans-serif" fontSize="8" fontWeight="700" textAnchor="middle">
        <text x="297" y="881" fill="#777">
          Y
        </text>
        <text x="325" y="905" fill="#c9502c">
          X
        </text>
        <text x="321" y="923" fill="#1f6fd0">
          Z
        </text>
      </g>

      <path d="M1360.500 407.500v16l3.500-3.500 3 5.500 2.500-1-2.500-5.500h4.500z" fill="#fff" stroke="#223" />
    </svg>
  );
}

const paneTabs = [
  { name: "3DEXPERIENCE", icon: Wheel },
  { name: "Resources", icon: Home },
  { name: "Design Library", icon: Books, active: true },
  { name: "File Explorer", icon: OpenFolder },
  { name: "View Palette", icon: ViewPalette },
  { name: "Appearances", icon: AppearanceBall },
  { name: "Custom Properties", icon: PropertyList },
  { name: "Markups", icon: RedBlue },
  { name: "Forum", icon: Forum },
];

function GraphicsArea() {
  return (
    <main className="relative min-w-0 flex-1">
      <Model />
      <div className="absolute top-[27px] right-0 flex w-[26px] flex-col border-b border-[#808080]">
        {paneTabs.map((tab) => (
          <button
            key={tab.name}
            aria-label={tab.name}
            className={clsx(
              "flex h-6 items-center justify-center border-t border-l border-[#808080] pr-px",
              tab.active ? "bg-[#f7f7f7]" : "bg-[#d3d3d3]",
            )}
          >
            <tab.icon />
          </button>
        ))}
      </div>
    </main>
  );
}

/* ---------- task pane ---------- */

function NavArrow({ forward }: { forward?: boolean }) {
  const color = forward ? "#c4c4c4" : "#1f6fa3";
  return (
    <Svg className={clsx("size-[18px]", forward && "rotate-180")}>
      <circle cx="9" cy="9" r="7.500" fill="#fff" stroke={forward ? "#ccc" : "#333"} />
      <path d="M4 9l5-4.500V7.500h5v3H9v3z" fill={color} />
    </Svg>
  );
}

const paneTools = [
  { name: "Add to Library", icon: AddBooks },
  { name: "Add File Location", icon: NewBooks },
  { name: "Create New Folder", icon: NewFolder },
  { name: "Refresh", icon: Refresh },
  { name: "Up One Level", icon: UpArrow },
  { name: "Configure Toolbox", icon: Bolt },
];

const libraryItems = [
  { label: "SOLIDWORKS Content", icon: SolidWorks, children: true },
  { label: "Design Library", icon: Books, children: true },
  { label: "SmartComponent", icon: Books, selected: true },
  { label: "Toolbox", icon: Bolt, children: true },
];

function TaskPane() {
  return (
    <aside className="flex w-[354px] shrink-0 flex-col overflow-hidden border-l border-[#808080] bg-[#f7f7f7]">
      <div className="flex h-[22px] shrink-0 items-center border-b border-black bg-[#abadaf]">
        <button aria-label="Collapse pane" className="flex w-[29px] justify-center">
          <Svg box="0 0 11 9" className="h-[9px] w-[11px]">
            <path d="M5.500.500l-4 4 4 4M10 .5l-4 4 4 4" stroke="#222" strokeWidth="1.500" />
          </Svg>
        </button>
        <h2 className="flex-1 pr-1 text-center font-bold">Design Library</h2>
        <button aria-label="Options" className="flex w-[26px] shrink-0 justify-center">
          <Svg className="size-4">
            <circle cx="9" cy="9" r="7.200" fill="#fff" stroke="#222" strokeWidth="2" strokeDasharray="3.500 2.150" />
            <circle cx="9" cy="9" r="6.300" fill="#f4f4f4" stroke="#444" strokeWidth=".8" />
            <circle cx="9" cy="9" r="2.800" fill="#aaa" stroke="#222" />
          </Svg>
        </button>
        <button aria-label="Pin" className="flex w-[7px] shrink-0 overflow-hidden">
          <Svg box="0 0 12 10" className="ml-px h-[10px] w-3">
            <path d="M0 1h4l4 3h4v4H6l-6 2 3-4z" fill="#222" />
          </Svg>
        </button>
      </div>
      <div className="ml-[3px] flex h-[34px] shrink-0 items-center border-b border-[#a9a9a9] pb-0.5 pl-px">
        <button aria-label="Back" className="flex w-[27px] justify-center">
          <NavArrow />
        </button>
        <button aria-label="Forward" className="flex w-[27px] justify-center">
          <NavArrow forward />
        </button>
        <button aria-label="Recent" className="flex w-4 justify-center text-[#222]">
          <Caret className="h-1 w-[7px]" />
        </button>
        {paneTools.map((tool) => (
          <button key={tool.name} aria-label={tool.name} className="flex w-[27px] justify-center">
            <tool.icon />
          </button>
        ))}
      </div>
      <ul className="h-[179px] shrink-0 pt-[7px] pl-2">
        {libraryItems.map((item) => (
          <li key={item.label} className="flex h-[22px] items-center">
            <span className="w-[19px] pt-0.5 pl-1 text-[#a0a0a0]">{item.children ? <Chevron /> : null}</span>
            <button
              className={clsx("flex h-[22px] items-center gap-1.5 pr-1 pl-[3px]", item.selected && "bg-[#c5e1f9]")}
            >
              <item.icon />
              {item.label}
            </button>
          </li>
        ))}
      </ul>
      <div className="ml-1 h-[6px] shrink-0 border-t-3 border-b-2 border-t-[#9299ae] border-b-[#5d6581] bg-[#dfe3ee]" />
      <div className="flex pt-[19px] pl-[21px]">
        <button className="flex flex-col items-center gap-[9px]">
          <Motor />
          <span className="bg-[#0078d7] px-0.5 leading-[17px] text-white">Elektromotor</span>
        </button>
      </div>
    </aside>
  );
}

export default function App() {
  return (
    <div className="flex h-screen flex-col overflow-hidden bg-[#f7f7f7] font-['Open_Sans',sans-serif] text-[12px] leading-4 text-black">
      <Ribbon />
      <div className="flex min-h-0 flex-1">
        <div className="flex min-w-0 flex-1 flex-col bg-[#fefefe]">
          <TabBar />
          <div className="flex min-h-0 flex-1">
            <div className="flex shrink-0 bg-[#f7f7f7]">
              <SideStrip />
              <FeatureManager />
            </div>
            <GraphicsArea />
          </div>
        </div>
        <TaskPane />
      </div>
    </div>
  );
}
